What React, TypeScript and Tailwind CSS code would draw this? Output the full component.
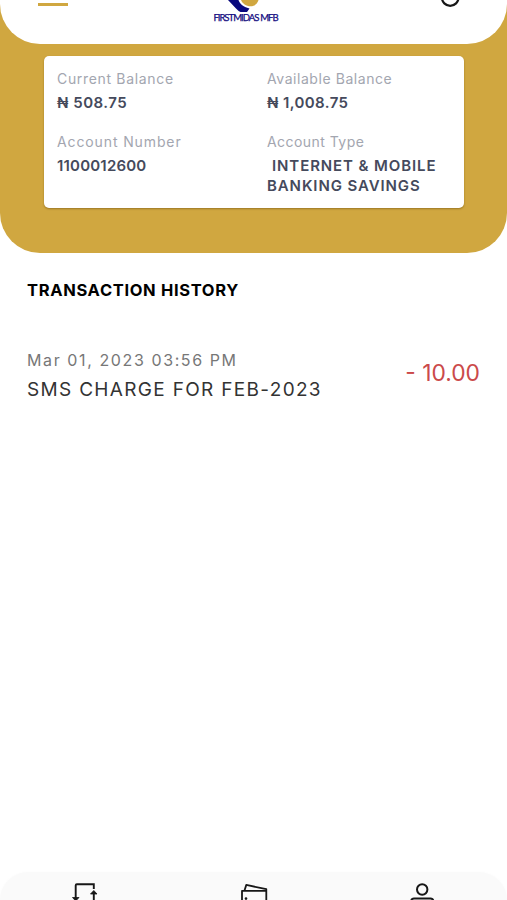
import type { ReactNode } from 'react';

function Header() {
  return (
    <header className="flex h-11 items-start justify-between rounded-b-[40px] bg-white pr-[47px] pl-[38px]">
      <div className="mt-[3px] h-[3px] w-[30px] bg-[#d0a740]" />
      <div className="-ml-[17px] flex w-[66px] flex-col items-center">
        <svg className="h-[12px] w-[66px]" viewBox="213 0 66 12" aria-hidden="true">
          <path d="M228 0H238.500C239.500 3.500 243 7 249.500 8.500L247 12H240.500Q238 10.800 236 8.500Z" fill="#08087e" />
          <path d="M241 0H258.500C257.500 3.500 254.500 6.300 250.500 6.300C246 6.300 242.500 3.500 241 0Z" fill="#d0a740" />
        </svg>
        <span className="font-['Lato',sans-serif] text-[9.6px] leading-[12px] tracking-[-1.05px] [word-spacing:0.5px] whitespace-nowrap text-[#120a80] [-webkit-text-stroke:0.25px_#120a80]">
          FIRSTMIDAS MFB
        </span>
      </div>
      <svg className="h-2 w-5" viewBox="440 0 20 8" fill="none" aria-hidden="true">
        <circle cx="450.200" cy="-2.500" r="8.300" stroke="#171717" strokeWidth="2.200" />
      </svg>
    </header>
  );
}

function Field({ label, labelClass, children }: { label: string; labelClass: string; children: ReactNode }) {
  return (
    <div>
      <p className={`text-[14px] leading-5 whitespace-nowrap text-[#a3a6b0] ${labelClass}`}>{label}</p>
      <div className="mt-1 text-[15px] leading-[20px] font-semibold whitespace-nowrap text-[#454a5c]">{children}</div>
    </div>
  );
}

function AccountCard() {
  return (
    <div className="mx-[44px] mt-3 grid h-[152px] w-[420px] grid-cols-2 content-start gap-y-[19px] rounded-[5px] bg-white pt-[13px] pl-[13px] shadow-[0_1px_2px_rgba(90,60,0,0.45)]">
      <Field label="Current Balance" labelClass="tracking-[0.67px]">
        <span className="tracking-[0.5px]">₦ 508.75</span>
      </Field>
      <div className="pl-[6.5px]">
        <Field label="Available Balance" labelClass="tracking-[0.56px]">
          <span className="tracking-[0.4px]">₦ 1,008.75</span>
        </Field>
      </div>
      <Field label="Account Number" labelClass="tracking-[0.88px]">
        <span className="tracking-[0.2px]">1100012600</span>
      </Field>
      <div className="pl-[6.5px]">
        <Field label="Account Type" labelClass="tracking-[0.45px]">
          <p className="pl-[5px] tracking-[0.9px]">INTERNET &amp; MOBILE</p>
          <p className="tracking-[0.9px]">BANKING SAVINGS</p>
        </Field>
      </div>
    </div>
  );
}

function TransactionHistory() {
  return (
    <section className="flex-1 px-[27px]">
      <h2 className="mt-[25px] text-[16.5px] leading-6 font-bold tracking-[0.66px] text-black">TRANSACTION HISTORY</h2>
      <div className="mt-[46px] flex items-start justify-between whitespace-nowrap">
        <div>
          <p className="text-[16px] leading-6 tracking-[1.6px] text-[#777777]">Mar 01, 2023 03:56 PM</p>
          <p className="mt-[5px] text-[19px] leading-[26px] tracking-[1.32px] text-[#333333]">SMS CHARGE FOR FEB-2023</p>
        </div>
        <p className="mt-[10px] text-[22.8px] leading-[30px] text-[#cb4a4a]">- 10.00</p>
      </div>
    </section>
  );
}

function BottomNav() {
  return (
    <nav className="flex h-7 justify-between rounded-t-[40px] bg-[#fafafa] px-[70px] shadow-[0_0_3px_rgba(0,0,0,0.02)]">
      <svg className="h-7 w-[30px]" viewBox="70 872 30 28" fill="none" stroke="#171717" strokeWidth="1.900" aria-hidden="true">
        <path d="M75.700 898V885.500Q75.700 884.300 76.900 884.300H93.800V889M93.800 892V901" />
        <path d="M72.500 897.500H79L75.700 901ZM90.500 894L93.800 890.500L97 894Z" fill="#171717" strokeWidth="0.800" />
      </svg>
      <svg className="h-7 w-[30px]" viewBox="239 872 30 28" fill="none" stroke="#171717" strokeWidth="1.800" strokeLinejoin="round" aria-hidden="true">
        <path d="M242 901V890.800H266.300V901M244.500 890.500L246.300 884.900L266.300 889.200V891" />
        <circle cx="246" cy="898.600" r="1.300" fill="#171717" stroke="none" />
      </svg>
      <svg className="h-7 w-[30px]" viewBox="407.500 872 30 28" fill="none" stroke="#171717" strokeWidth="2" aria-hidden="true">
        <circle cx="422.700" cy="889.500" r="5.200" />
        <path d="M411.800 901Q411.800 898.500 414.500 898.500H431Q433.700 898.500 433.700 901" />
      </svg>
    </nav>
  );
}

export default function App() {
  return (
    <main className="flex h-[900px] w-[507px] flex-col overflow-hidden bg-white font-['Inter',sans-serif]">
      <section className="h-[253px] rounded-b-[40px] bg-[#d0a740]">
        <Header />
        <AccountCard />
      </section>
      <TransactionHistory />
      <BottomNav />
    </main>
  );
}
